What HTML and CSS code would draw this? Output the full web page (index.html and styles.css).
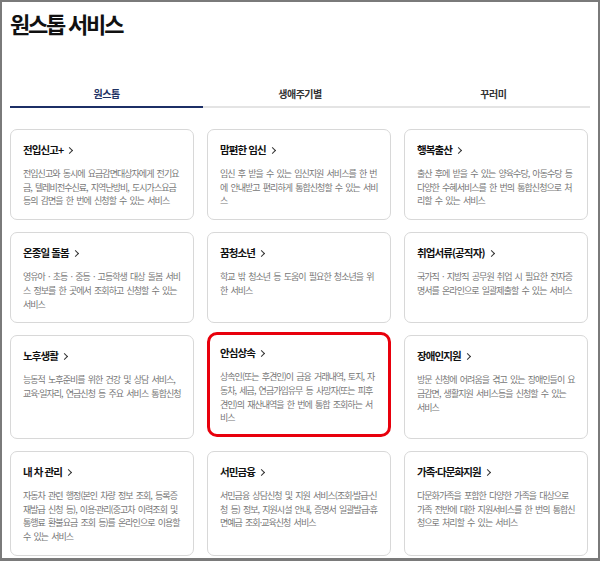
FILE: index.html
```html
<!DOCTYPE html>
<html lang="ko">
<head>
    <meta charset="UTF-8">
    <meta name="viewport" content="width=device-width, initial-scale=1.0">
    <title>원스톱 서비스</title>
    <link rel="stylesheet" href="styles.css">
</head>
<body>
    <div class="frame">
        <h1>원스톱 서비스</h1>

        <div class="tabs">
            <div class="tab active">원스톱</div>
            <div class="tab">생애주기별</div>
            <div class="tab">꾸러미</div>
        </div>

        <div class="cards">
            <div class="card">
                <div class="card-title">전입신고+ <span class="arrow"></span></div>
                <p class="card-desc">전입신고와 동시에 요금감면대상자에게 전기요금, 텔레비전수신료, 지역난방비, 도시가스요금 등의 감면을 한 번에 신청할 수 있는 서비스</p>
            </div>
            <div class="card">
                <div class="card-title">맘편한 임신 <span class="arrow"></span></div>
                <p class="card-desc">임신 후 받을 수 있는 임신지원 서비스를 한 번에 안내받고 편리하게 통합신청할 수 있는 서비스</p>
            </div>
            <div class="card">
                <div class="card-title">행복출산 <span class="arrow"></span></div>
                <p class="card-desc">출산 후에 받을 수 있는 양육수당, 아동수당 등 다양한 수혜서비스를 한 번의 통합신청으로 처리할 수 있는 서비스</p>
            </div>

            <div class="card">
                <div class="card-title">온종일 돌봄 <span class="arrow"></span></div>
                <p class="card-desc">영유아 · 초등 · 중등 · 고등학생 대상 돌봄 서비스 정보를 한 곳에서 조회하고 신청할 수 있는 서비스</p>
            </div>
            <div class="card">
                <div class="card-title">꿈청소년 <span class="arrow"></span></div>
                <p class="card-desc">학교 밖 청소년 등 도움이 필요한 청소년을 위한 서비스</p>
            </div>
            <div class="card">
                <div class="card-title">취업서류(공직자) <span class="arrow"></span></div>
                <p class="card-desc">국가직 · 지방직 공무원 취업 시 필요한 전자증명서를 온라인으로 일괄제출할 수 있는 서비스</p>
            </div>

            <div class="card">
                <div class="card-title">노후생활 <span class="arrow"></span></div>
                <p class="card-desc">능동적 노후준비를 위한 건강 및 상담 서비스, 교육·일자리, 연금신청 등 주요 서비스 통합신청</p>
            </div>
            <div class="card highlight">
                <div class="card-title">안심상속 <span class="arrow"></span></div>
                <p class="card-desc">상속인(또는 후견인)이 금융 거래내역, 토지, 자동차, 세금, 연금가입유무 등 사망자(또는 피후견인)의 재산내역을 한 번에 통합 조회하는 서비스</p>
            </div>
            <div class="card">
                <div class="card-title">장애인지원 <span class="arrow"></span></div>
                <p class="card-desc">방문 신청에 어려움을 겪고 있는 장애인들이 요금감면, 생활지원 서비스등을 신청할 수 있는 서비스</p>
            </div>

            <div class="card">
                <div class="card-title">내 차 관리 <span class="arrow"></span></div>
                <p class="card-desc">자동차 관련 행정(본인 차량 정보 조회, 등록증 재발급 신청 등), 이용·관리(중고차 이력조회 및 통행료 환불요금 조회 등)를 온라인으로 이용할 수 있는 서비스</p>
            </div>
            <div class="card">
                <div class="card-title">서민금융 <span class="arrow"></span></div>
                <p class="card-desc">서민금융 상담신청 및 지원 서비스(조회·발급·신청 등) 정보, 지원시설 안내, 증명서 일괄발급·휴면예금 조회·교육신청 서비스</p>
            </div>
            <div class="card">
                <div class="card-title">가족·다문화지원 <span class="arrow"></span></div>
                <p class="card-desc">다문화가족을 포함한 다양한 가족을 대상으로 가족 전반에 대한 지원서비스를 한 번의 통합신청으로 처리할 수 있는 서비스</p>
            </div>
        </div>
    </div>
</body>
</html>
```

FILE: styles.css
```css
body {
    margin: 0;
    font-family: "Noto Sans CJK KR", "Noto Sans", sans-serif;
    background: #fff;
}
.frame {
    height: 561px;
    box-sizing: border-box;
    border: 2px solid #7a7a7a;
    border-bottom-width: 3px;
    padding: 8px 10px 0 8px;
    overflow: hidden;
    background: #fff;
}
h1 {
    margin: 0;
    font-size: 22px;
    line-height: 26px;
    font-weight: 700;
    letter-spacing: -2.2px;
    color: #111;
}
.tabs {
    display: grid;
    grid-template-columns: repeat(3, 1fr);
    margin: 50px -2px 0 0;
}
.tab {
    text-align: center;
    font-size: 10px;
    line-height: 16px;
    font-weight: 700;
    letter-spacing: -0.5px;
    color: #333;
    padding-bottom: 4px;
    border-bottom: 2px solid #e4e4e4;
}
.tab.active {
    color: #1f3264;
    border-bottom-color: #1c2f66;
}
.cards {
    display: grid;
    grid-template-columns: repeat(3, 1fr);
    gap: 12px 13px;
    margin-top: 21px;
}
.card {
    border: 1px solid #d8d8d8;
    border-radius: 7px;
    padding: 12px 12px 11px;
}
.card.highlight {
    border: 3px solid #e8000c;
    border-radius: 10px;
    padding: 10px 10px 9px;
    margin-top: -3px;
    margin-bottom: 2px;
}
.card-title {
    font-size: 10.5px;
    line-height: 16px;
    font-weight: 700;
    letter-spacing: -0.9px;
    color: #111;
}
.arrow {
    display: inline-block;
    width: 4px;
    height: 4px;
    margin-left: 2px;
    border-right: 1.2px solid #333;
    border-top: 1.2px solid #333;
    transform: rotate(45deg);
    vertical-align: 1px;
}
.card-desc {
    margin: 9px 0 0;
    font-size: 9px;
    line-height: 13.7px;
    letter-spacing: -0.975px;
    word-spacing: 1.6px;
    color: #777;
}
```
